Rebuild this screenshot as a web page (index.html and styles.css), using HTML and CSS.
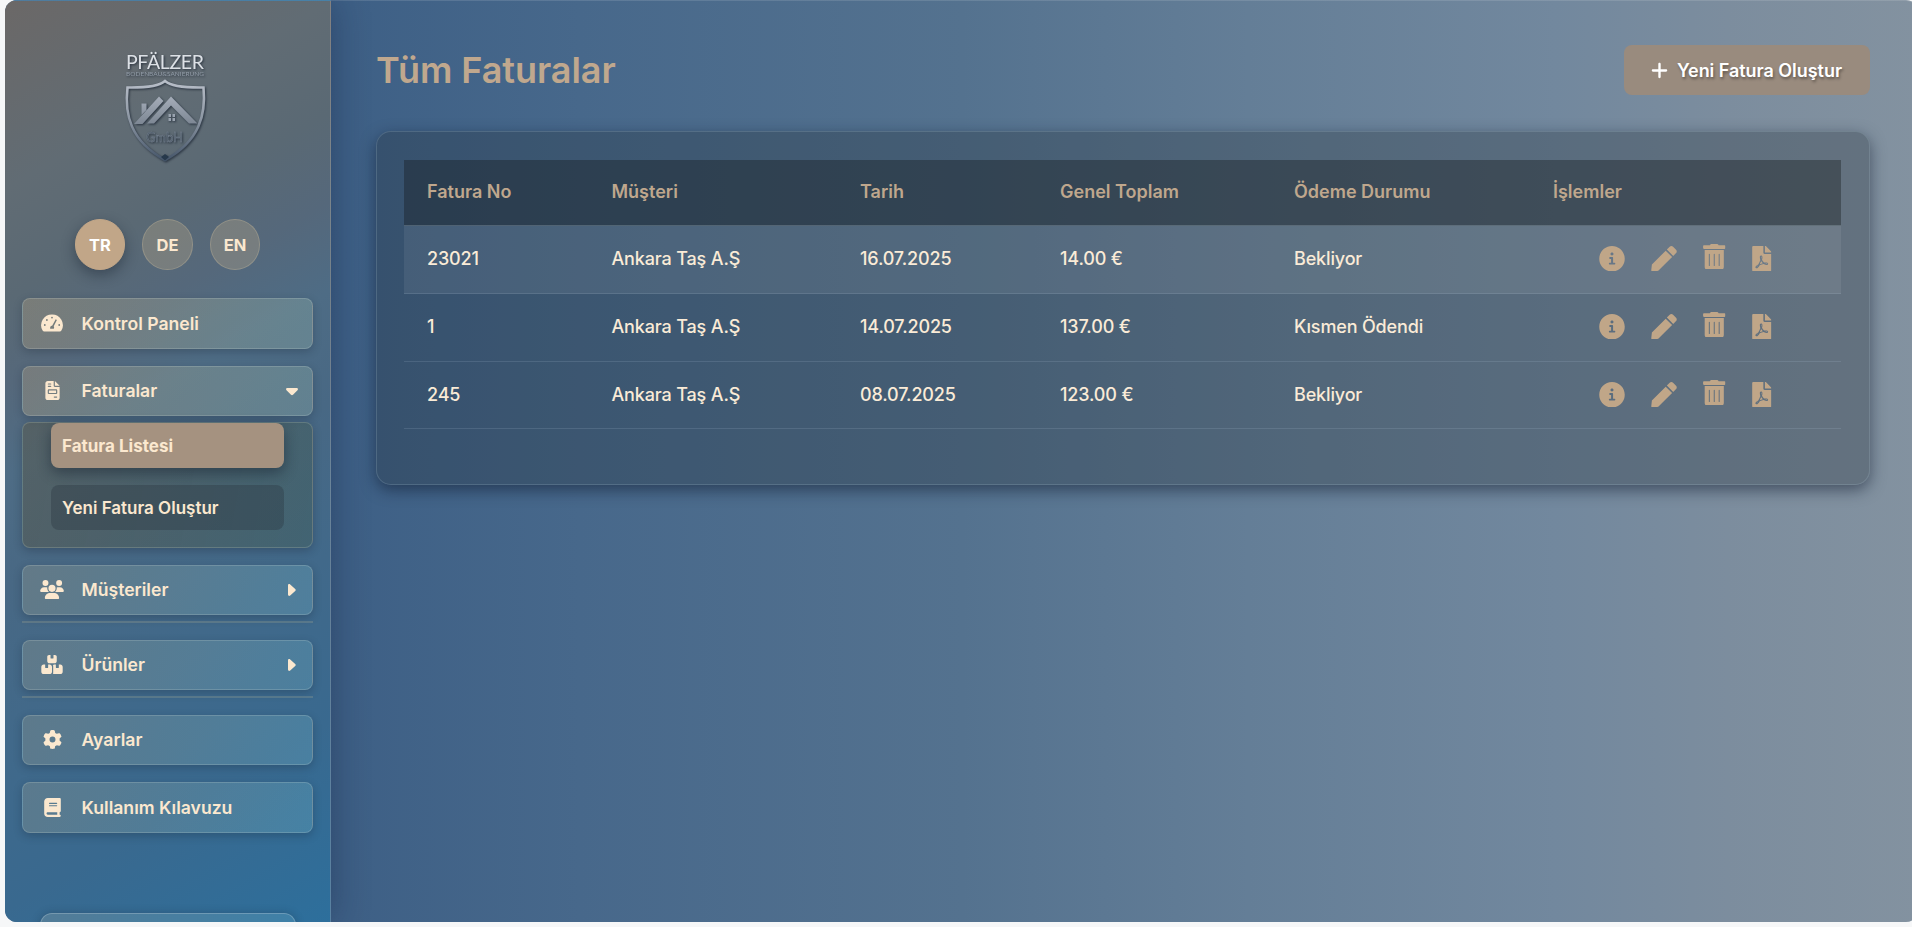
FILE: index.html
```html
<!DOCTYPE html>
<html lang="tr">
<head>
<meta charset="utf-8">
<title>Tüm Faturalar</title>
<link rel="stylesheet" href="styles.css">
</head>
<body>
<svg class="sprite" aria-hidden="true">
  <defs>
    <symbol id="i-gauge" viewBox="0 0 22 18"><path fill-rule="evenodd" d="M11 .4A10.800 10.800 0 0 0 1.600 16.600Q2.200 17.600 3.200 17.600H18.800Q19.800 17.600 20.400 16.600A10.800 10.800 0 0 0 11 .4ZM10.100 3.600a.9 .9 0 1 0 1.800 0a.9 .9 0 1 0-1.800 0ZM5 6a.9 .9 0 1 0 1.800 0a.9 .9 0 1 0-1.800 0ZM2.900 11a.9 .9 0 1 0 1.800 0a.9 .9 0 1 0-1.800 0ZM17.300 11a.9 .9 0 1 0 1.800 0a.9 .9 0 1 0-1.800 0ZM14.700 5.300L15.900 6L12.700 12.300Q13.500 13.400 12.800 14.700H9.200Q8.600 12 11.300 11.500Z"/></symbol>
    <symbol id="i-invoice" viewBox="0 0 384 512"><path d="M64 0C28.700 0 0 28.700 0 64V448c0 35.300 28.700 64 64 64H320c35.300 0 64-28.700 64-64V160H256c-17.700 0-32-14.300-32-32V0H64zM256 0V128H384L256 0zM80 64h64c8.800 0 16 7.200 16 16s-7.200 16-16 16H80c-8.800 0-16-7.200-16-16s7.200-16 16-16zm0 64h64c8.800 0 16 7.200 16 16s-7.200 16-16 16H80c-8.800 0-16-7.200-16-16s7.200-16 16-16zm16 96H288c17.700 0 32 14.300 32 32v64c0 17.700-14.300 32-32 32H96c-17.700 0-32-14.300-32-32V256c0-17.700 14.300-32 32-32zm0 32v64H288V256H96zM240 416h64c8.800 0 16 7.200 16 16s-7.200 16-16 16H240c-8.800 0-16-7.200-16-16s7.200-16 16-16z"/></symbol>
    <symbol id="i-users" viewBox="0 0 640 512"><path d="M144 0a80 80 0 1 1 0 160A80 80 0 1 1 144 0zM512 0a80 80 0 1 1 0 160A80 80 0 1 1 512 0zM0 298.7C0 239.8 47.8 192 106.7 192h42.7c15.9 0 31 3.5 44.6 9.7c-1.3 7.2-1.9 14.7-1.9 22.3c0 38.2 16.8 72.5 43.3 96c-.2 0-.4 0-.7 0H21.3C9.6 320 0 310.4 0 298.7zM405.3 320c-.2 0-.4 0-.7 0c26.6-23.5 43.3-57.8 43.3-96c0-7.6-.7-15-1.9-22.3c13.6-6.3 28.7-9.7 44.6-9.7h42.7C592.2 192 640 239.8 640 298.7c0 11.8-9.6 21.3-21.3 21.3H405.3zM224 224a96 96 0 1 1 192 0 96 96 0 1 1 -192 0zM128 485.3C128 411.7 187.7 352 261.3 352H378.7C452.3 352 512 411.7 512 485.3c0 14.7-11.9 26.7-26.7 26.7H154.7c-14.7 0-26.7-11.9-26.7-26.7z"/></symbol>
    <symbol id="i-boxes" viewBox="0 0 576 512"><path d="M248 0H208c-26.5 0-48 21.5-48 48V160c0 35.3 28.7 64 64 64H352c35.3 0 64-28.7 64-64V48c0-26.5-21.5-48-48-48H328V80c0 8.8-7.2 16-16 16H264c-8.8 0-16-7.2-16-16V0zM64 256c-35.3 0-64 28.7-64 64V448c0 35.3 28.7 64 64 64H224c35.3 0 64-28.7 64-64V320c0-35.3-28.7-64-64-64H184v80c0 8.8-7.2 16-16 16H120c-8.8 0-16-7.2-16-16V256H64zM352 512H512c35.3 0 64-28.7 64-64V320c0-35.3-28.7-64-64-64H472v80c0 8.8-7.2 16-16 16H408c-8.8 0-16-7.2-16-16V256H352c-15 0-28.8 5.1-39.7 13.8c4.9 10.4 7.7 22 7.7 34.2V464c0 12.2-2.8 23.8-7.7 34.2C323.2 506.9 337 512 352 512z"/></symbol>
    <symbol id="i-gear" viewBox="0 0 512 512"><path d="M495.9 166.6c3.2 8.7 .5 18.4-6.4 24.6l-43.3 39.4c1.1 8.3 1.7 16.8 1.7 25.4s-.6 17.1-1.7 25.4l43.3 39.4c6.9 6.2 9.6 15.9 6.4 24.6c-4.4 11.9-9.7 23.3-15.8 34.3l-4.7 8.1c-6.6 11-14 21.4-22.1 31.2c-5.9 7.2-15.7 9.6-24.5 6.8l-55.7-17.7c-13.4 10.3-28.2 18.9-44 25.4l-12.5 57.1c-2 9.1-9 16.3-18.2 17.8c-13.8 2.3-28 3.5-42.5 3.5s-28.7-1.2-42.5-3.5c-9.2-1.5-16.2-8.7-18.2-17.8l-12.5-57.1c-15.8-6.5-30.6-15.1-44-25.4L83.1 425.9c-8.8 2.8-18.6 .3-24.5-6.8c-8.1-9.8-15.5-20.2-22.1-31.2l-4.7-8.1c-6.1-11-11.4-22.4-15.8-34.3c-3.2-8.7-.5-18.4 6.4-24.6l43.3-39.4C64.6 273.1 64 264.6 64 256s.6-17.1 1.7-25.4L22.4 191.2c-6.9-6.2-9.6-15.9-6.4-24.6c4.4-11.9 9.7-23.3 15.8-34.3l4.7-8.1c6.6-11 14-21.4 22.1-31.2c5.9-7.2 15.7-9.6 24.5-6.8l55.7 17.7c13.4-10.3 28.2-18.9 44-25.4l12.5-57.1c2-9.1 9-16.3 18.2-17.8C227.3 1.2 241.5 0 256 0s28.7 1.2 42.5 3.5c9.2 1.5 16.2 8.7 18.2 17.8l12.5 57.1c15.8 6.5 30.6 15.1 44 25.4l55.7-17.7c8.8-2.8 18.6-.3 24.5 6.8c8.1 9.8 15.5 20.2 22.1 31.2l4.7 8.1c6.1 11 11.4 22.4 15.8 34.3zM256 336a80 80 0 1 0 0-160 80 80 0 1 0 0 160z"/></symbol>
    <symbol id="i-book" viewBox="0 0 448 512"><path d="M96 0C43 0 0 43 0 96V416c0 53 43 96 96 96H384h32c17.7 0 32-14.3 32-32s-14.3-32-32-32V384c17.7 0 32-14.3 32-32V32c0-17.7-14.3-32-32-32H384 96zm0 384H352v64H96c-17.7 0-32-14.3-32-32s14.3-32 32-32zm32-240c0-8.8 7.2-16 16-16H336c8.8 0 16 7.2 16 16s-7.2 16-16 16H144c-8.8 0-16-7.2-16-16zm16 48H336c8.8 0 16 7.2 16 16s-7.2 16-16 16H144c-8.8 0-16-7.2-16-16s7.2-16 16-16z"/></symbol>
    <symbol id="i-plus" viewBox="0 0 448 512"><path d="M256 80c0-17.7-14.3-32-32-32s-32 14.3-32 32V224H48c-17.7 0-32 14.3-32 32s14.3 32 32 32H192V432c0 17.7 14.3 32 32 32s32-14.3 32-32V288H400c17.7 0 32-14.3 32-32s-14.3-32-32-32H256V80z"/></symbol>
    <symbol id="i-down" viewBox="0 0 12 8"><path d="M1.4 0H10.6C11.8 0 12.4 1.3 11.5 2.2L7 6.7C6.4 7.3 5.6 7.3 5 6.7L.5 2.2C-.4 1.3 .2 0 1.4 0Z"/></symbol>
    <symbol id="i-right" viewBox="0 0 8 12"><path d="M0 1.4V10.6C0 11.8 1.3 12.4 2.2 11.5L7.2 7C7.9 6.4 7.9 5.6 7.2 5L2.2 .5C1.3 -.4 0 .2 0 1.4Z"/></symbol>
    <symbol id="i-info" viewBox="8 8 496 496"><path d="M256 8C119.043 8 8 119.083 8 256c0 136.997 111.043 248 248 248s248-111.003 248-248C504 119.083 392.957 8 256 8zm0 125c17 0 30 13 30 29s-13 29-30 29-30-13-30-29 13-29 30-29zm54 235h-102c-8 0-13-6-13-14v-8c0-8 5-14 13-14h30v-72h-22c-8 0-13-6-13-14v-8c0-8 5-14 13-14h48c8 0 13 6 13 14v94h30c8 0 13 6 13 14v8c0 8-5 14-13 14z"/></symbol>
    <symbol id="i-pen" viewBox="0 0 512 512"><path d="M290.74 93.24l128.02 128.02-277.99 277.99-114.14 12.6C11.35 513.54-1.56 500.62.14 485.34l12.7-114.22 277.9-277.88zm207.2-19.06l-60.11-60.11c-18.75-18.75-49.16-18.75-67.91 0l-56.55 56.55 128.02 128.02 56.55-56.55c18.75-18.76 18.75-49.16 0-67.91z"/></symbol>
    <symbol id="i-trash" viewBox="0 0 448 512"><path d="M32 464a48 48 0 0 0 48 48h288a48 48 0 0 0 48-48V120H32zm281-257a10 10 0 0 1 20 0v226a10 10 0 0 1-20 0zm-99 0a10 10 0 0 1 20 0v226a10 10 0 0 1-20 0zm-99 0a10 10 0 0 1 20 0v226a10 10 0 0 1-20 0zM432 24H312l-9.4-14A24 24 0 0 0 281.1 0H166.8a23.72 23.72 0 0 0-21.4 10L136 24H16A16 16 0 0 0 0 40v42a16 16 0 0 0 16 16h416a16 16 0 0 0 16-16V40a16 16 0 0 0-16-16z"/></symbol>
    <symbol id="i-pdf" viewBox="0 0 384 512"><path d="M181.9 256.1c-5-16-4.9-46.9-2-46.9 8.4 0 7.6 36.9 2 46.9zm-1.7 47.2c-7.7 20.2-17.3 43.3-28.4 62.7 18.3-7 39-17.2 62.9-21.9-12.7-9.6-24.9-23.4-34.5-40.8zM86.1 428.1c0 .8 13.2-5.4 34.9-40.2-6.7 6.3-29.1 24.5-34.9 40.2zM248 160h136v328c0 13.3-10.7 24-24 24H24c-13.3 0-24-10.7-24-24V24C0 10.7 10.7 0 24 0h200v136c0 13.2 10.8 24 24 24zm-8 171.8c-20-12.2-33.3-29-42.7-53.8 4.5-18.5 11.6-46.6 6.2-64.2-4.7-29.4-42.4-26.5-47.8-6.8-5 18.3-.4 44.1 8.1 77-11.6 27.6-28.7 64.6-40.8 85.8-.1 0-.1.1-.2.1-27.1 13.9-73.6 44.5-54.5 68 5.6 6.9 16 10 21.5 10 17.9 0 35.7-18 61.1-61.8 25.8-8.5 54.1-19.1 79-23.2 21.7 11.8 47.1 19.5 64 19.5 29.2 0 31.2-32 19.7-43.4-13.9-13.6-54.3-9.7-73.6-7.2zM377 105L279 7c-4.5-4.5-10.6-7-17-7h-6v128h128v-6.1c0-6.3-2.5-12.4-7-16.9zm-74.1 255.3c4.1-2.7-2.5-11.9-42.8-9 37.1 15.8 42.8 9 42.8 9z"/></symbol>
  </defs>
</svg>
<div class="app">
  <aside class="sidebar">
    <svg class="logo" viewBox="0 0 84 118" width="84" height="118">
      <defs>
        <linearGradient id="metal" x1="0" y1="0" x2="0" y2="1"><stop offset="0" stop-color="#b9bfc9"/><stop offset=".5" stop-color="#8b95a2"/><stop offset="1" stop-color="#46566a"/></linearGradient>
        <linearGradient id="roof" x1="0" y1="0" x2="0" y2="1"><stop offset="0" stop-color="#a5adb9"/><stop offset="1" stop-color="#7d8794"/></linearGradient>
      </defs>
      <text class="logo-name" x="3" y="20.500" textLength="78" lengthAdjust="spacing">PFÄLZER</text>
      <text class="logo-sub" x="3" y="27.500" textLength="78" lengthAdjust="spacingAndGlyphs">BODENBAU&amp;SANIERUNG</text>
      <g class="logo-art">
        <path d="M42 33Q34 40 4.500 39.500C1.500 66 7 93 42 112C77 93 83 66 80.500 39.500Q50 40 42 33Z" fill="none" stroke="url(#metal)" stroke-width="2.600"/>
        <path d="M11 76L36 48.500L40.500 53L19.500 76Z M24 75.500L48 48.500L74.500 75.500H66L48 57.500L31 75.500Z M18.500 55.500H23.500V62L18.500 67Z" fill="url(#roof)"/>
        <path d="M45.500 66h2.500v3h-2.500zM49.500 66h2.500v3h-2.500zM45.500 70h2.500v3h-2.500zM49.500 70h2.500v3h-2.500z" fill="#9aa3af"/>
        <path d="M42 106L46 109L42 112.500L38 109Z" fill="#27394b"/>
      </g>
      <text class="logo-gmbh" x="23" y="94" textLength="37" lengthAdjust="spacingAndGlyphs">GmbH</text>
    </svg>
    <div class="langs">
      <button class="lang lang-on">TR</button>
      <button class="lang">DE</button>
      <button class="lang">EN</button>
    </div>
    <nav class="nav">
      <a class="item warm"><svg class="ico w22 i-gauge"><use href="#i-gauge"/></svg><span>Kontrol Paneli</span></a>
      <a class="item warm open"><svg class="ico w15"><use href="#i-invoice"/></svg><span>Faturalar</span><svg class="caret-down"><use href="#i-down"/></svg></a>
      <div class="submenu">
        <a class="sub sub-on">Fatura Listesi</a>
        <a class="sub">Yeni Fatura Oluştur</a>
      </div>
      <a class="item group"><svg class="ico w24"><use href="#i-users"/></svg><span>Müşteriler</span><svg class="caret-right"><use href="#i-right"/></svg></a>
      <hr class="rule">
      <a class="item group"><svg class="ico w22"><use href="#i-boxes"/></svg><span>Ürünler</span><svg class="caret-right"><use href="#i-right"/></svg></a>
      <hr class="rule">
      <a class="item short"><svg class="ico w19"><use href="#i-gear"/></svg><span>Ayarlar</span></a>
      <a class="item"><svg class="ico w17"><use href="#i-book"/></svg><span>Kullanım Kılavuzu</span></a>
    </nav>
    <div class="footer-box"></div>
  </aside>
  <main class="main">
    <header class="head">
      <h1 class="title">Tüm Faturalar</h1>
      <button class="create"><svg class="plus"><use href="#i-plus"/></svg>Yeni Fatura Oluştur</button>
    </header>
    <section class="card">
      <div class="row thead"><span>Fatura No</span><span>Müşteri</span><span>Tarih</span><span>Genel Toplam</span><span>Ödeme Durumu</span><span>İşlemler</span></div>
      <div class="row hover"><span>23021</span><span>Ankara Taş A.Ş</span><span>16.07.2025</span><span>14.00 €</span><span>Bekliyor</span>
        <span class="acts"><svg class="a-info"><use href="#i-info"/></svg><svg class="a-pen"><use href="#i-pen"/></svg><svg class="a-trash"><use href="#i-trash"/></svg><svg class="a-pdf"><use href="#i-pdf"/></svg></span></div>
      <div class="row"><span>1</span><span>Ankara Taş A.Ş</span><span>14.07.2025</span><span>137.00 €</span><span>Kısmen Ödendi</span>
        <span class="acts"><svg class="a-info"><use href="#i-info"/></svg><svg class="a-pen"><use href="#i-pen"/></svg><svg class="a-trash"><use href="#i-trash"/></svg><svg class="a-pdf"><use href="#i-pdf"/></svg></span></div>
      <div class="row last"><span>245</span><span>Ankara Taş A.Ş</span><span>08.07.2025</span><span>123.00 €</span><span>Bekliyor</span>
        <span class="acts"><svg class="a-info"><use href="#i-info"/></svg><svg class="a-pen"><use href="#i-pen"/></svg><svg class="a-trash"><use href="#i-trash"/></svg><svg class="a-pdf"><use href="#i-pdf"/></svg></span></div>
    </section>
  </main>
</div>
</body>
</html>
```
FILE: styles.css
```css
* { box-sizing: border-box; }
body {
  margin: 0;
  height: 927px;
  overflow: hidden;
  background: #f6f7f8;
  font-family: Inter, "Liberation Sans", sans-serif;
  font-size: 18px;
  color: #faebd7;
}
.sprite { display: none; }
svg { flex: none; fill: currentColor; }
.app {
  display: flex;
  margin: 0 -6px 0 5px;
  height: 922px;
  border-radius: 12px;
  overflow: hidden;
  background: linear-gradient(90deg, #3a5c82 0, #3e6086 18%, #47688b 30%, #54728f 50%, #647e97 65%, #72889e 81%, #7c8d9e 90%, #8392a0 100%);
  box-shadow: inset 0 1px 0 rgba(255, 255, 255, .12);
}
.sidebar {
  display: flex;
  flex-direction: column;
  align-items: center;
  width: 326px;
  height: 922px;
  padding: 47px 17px 0;
  overflow: hidden;
  border-right: 1px solid rgba(255, 255, 255, .16);
  border-top: 1px solid rgba(255, 255, 255, .12);
  background: linear-gradient(150deg, #6b6867 0, #616c74 17%, #5a6974 27%, #55687b 35%, #4e6c85 43%, #486884 53%, #41698a 67%, #39698f 82%, #2d6f9c 100%);
  box-shadow: 0 0 34px rgba(15, 25, 60, .38);
  flex: none;
}
.logo { margin-right: 5px; overflow: visible; }
.logo text { font-family: Lato, sans-serif; }
.logo .logo-name { font-size: 19.500px; fill: #dde1e6; }
.logo .logo-sub { font-size: 6.500px; fill: #929ca7; }
.logo .logo-gmbh { font-size: 14px; fill: #4c5967; stroke: #7d8996; stroke-width: .4; }
.logo text, .logo-art { filter: drop-shadow(1px 1px 1px rgba(10, 20, 35, .65)); }
.langs { display: flex; gap: 17px; margin-top: 53px; }
.lang {
  width: 50.500px;
  height: 50.500px;
  padding: 1px 0 0;
  border-radius: 50%;
  border: 1px solid rgba(192, 180, 155, .36);
  background: rgba(188, 170, 138, .33);
  color: #fbe8cf;
  font: 700 16.500px Inter, sans-serif;
}
.lang-on { background: #c1a688; border-color: #c1a688; color: #fff; box-shadow: 0 5px 14px rgba(15, 25, 40, .4); }
.nav { display: flex; flex-direction: column; width: 291px; margin-top: 28px; color: #fbe8cf; }
.item {
  display: grid;
  grid-template-columns: 38px 1fr auto;
  align-items: center;
  height: 51px;
  margin-bottom: 17px;
  padding: 0 14px 0 10px;
  border: 1px solid rgba(205, 220, 215, .22);
  border-radius: 8px;
  background: linear-gradient(100deg, rgba(178, 174, 146, .25), rgba(125, 195, 210, .25));
  box-shadow: 0 3px 9px rgba(20, 30, 45, .26);
  font-weight: 600;
}
.item.warm { background: linear-gradient(100deg, rgba(195, 170, 130, .3), rgba(155, 188, 175, .3)); }
.item span { padding-left: 10.500px; font-size: 17.600px; }
.item.open { height: 50px; margin-bottom: 6px; }
.item.group { margin-bottom: 5px; height: 50px; }
.item.short { height: 50px; }
.ico { height: 19px; justify-self: center; }
.i-gauge { height: 18px; }
.w24 { width: 24px; } .w22 { width: 22px; } .w15 { width: 15px; } .w19 { width: 19px; } .w17 { width: 17px; }
.caret-down { width: 12px; height: 8px; margin-top: 2px; }
.caret-right { width: 8px; height: 12px; margin-right: 2px; }
.submenu {
  display: flex;
  flex-direction: column;
  gap: 17px;
  height: 126px;
  margin-bottom: 17px;
  padding: 0 28px;
  border: 1px solid rgba(192, 205, 190, .24);
  border-radius: 8px;
  background: linear-gradient(100deg, rgba(88, 88, 74, .5), rgba(66, 94, 88, .45));
  box-shadow: 0 3px 9px rgba(20, 30, 45, .28);
}
.sub { height: 45px; padding: 1px 0 0 11px; border-radius: 8px; background: rgba(42, 54, 64, .36); font-size: 17px; font-weight: 600; line-height: 45px; }
.sub-on { background: #a59280; font-weight: 700; box-shadow: 0 5px 14px rgba(15, 25, 40, .45); }
.rule { width: 100%; height: 2px; margin: 1px 0 17px; border: 0; background: rgba(192, 185, 150, .22); }
.footer-box {
  flex: none;
  width: 256px;
  height: 50px;
  margin-top: 63px;
  border: 1px solid rgba(205, 220, 225, .3);
  border-radius: 12px;
  background: linear-gradient(100deg, rgba(192, 200, 180, .2), rgba(130, 200, 220, .2));
  box-shadow: 0 0 8px rgba(20, 30, 45, .25);
}
.main { flex: 1; padding: 45px 48px 0 45px; }
.head { display: flex; align-items: center; justify-content: space-between; height: 50px; }
.title { margin: 0; color: #c0a88e; font-size: 36px; font-weight: 600; letter-spacing: -.05px; }
.create {
  display: flex;
  align-items: center;
  gap: 9px;
  width: 246px;
  height: 50px;
  padding: 0 0 0 27px;
  border: 0;
  border-radius: 8px;
  background: #998b7e;
  color: #fff;
  font: 600 18px Inter, sans-serif;
  letter-spacing: -.04px;
  text-shadow: 1px 2px 3px rgba(0, 0, 0, .4);
  white-space: nowrap;
}
.plus { width: 17px; height: 19px; }
.card {
  height: 354px;
  margin-top: 36px;
  padding: 28px 28px 28px 27px;
  border: 1px solid rgba(190, 210, 225, .18);
  border-radius: 15px;
  background: rgba(38, 50, 60, .32);
  box-shadow: 0 5px 15px rgba(10, 20, 40, .5);
}
.row {
  display: grid;
  grid-template-columns: 184.500px 248.500px 200px 234px 259px 1fr;
  align-items: center;
  height: 68px;
  padding: 0 0 2px 23px;
  border-bottom: 1px solid rgba(190, 210, 225, .15);
  font-weight: 500;
  letter-spacing: -.15px;
}
.thead { height: 66px; background: rgba(22, 26, 28, .38); color: #bfa78d; font-weight: 600; letter-spacing: 0; border-color: rgba(190, 210, 225, .25); }
.hover { background: rgba(255, 255, 255, .075); }
.last { height: 67px; padding-bottom: 1px; }
.acts { display: flex; align-items: center; gap: 26.200px; padding-left: 46px; color: #c0a688; }
.acts svg { height: 25.500px; }
.a-info { width: 26px; } .a-pen { width: 26px; } .a-trash { width: 22.500px; transform: translateY(-2px); } .a-pdf { width: 19.500px; }
```
